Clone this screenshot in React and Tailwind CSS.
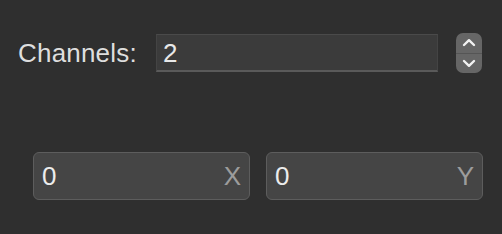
export default function App() {
  const font = { fontFamily: '"Liberation Sans", Arial, sans-serif' };
  return (
    <div className="w-[502px] h-[234px] bg-[#2f2f2f] flex flex-col" style={font}>
      <div className="flex items-center pt-[33px] pl-[18px]">
        <span className="text-[26px] leading-none text-[#dedede] w-[138px] tracking-[0.2px]">Channels:</span>
        <div className="w-[282px] h-[38px] bg-[#3b3b3b] border-t border-t-[#4a4a4a] border-x border-x-[#444] border-b-2 border-b-[#5a5a5a] flex items-center pl-[6px] text-[26px] leading-none text-[#e8e8e8]">
          2
        </div>
        <div className="ml-[18px] w-[26px] h-[40px] rounded-[7px] bg-[#666] flex flex-col overflow-hidden">
          <div className="flex-1 flex items-center justify-center border-b border-b-[#555]">
            <svg width="14" height="9" viewBox="0 0 14 9" fill="none">
              <path d="M2 7 L7 2.2 L12 7" stroke="#f2f2f2" strokeWidth="2.4" strokeLinecap="round" strokeLinejoin="round" />
            </svg>
          </div>
          <div className="flex-1 flex items-center justify-center">
            <svg width="14" height="9" viewBox="0 0 14 9" fill="none">
              <path d="M2 2 L7 6.8 L12 2" stroke="#f2f2f2" strokeWidth="2.4" strokeLinecap="round" strokeLinejoin="round" />
            </svg>
          </div>
        </div>
      </div>
      <div className="flex gap-[16px] pl-[33px] mt-[79px]">
        <div className="w-[217px] h-[48px] rounded-[6px] bg-[#454545] border-[1.5px] border-[#5d5d5d] flex items-center justify-between pl-[8px] pr-[8px] text-[26px] leading-none">
          <span className="text-[#ececec]">0</span>
          <span className="text-[#9c9c9c]">X</span>
        </div>
        <div className="w-[217px] h-[48px] rounded-[6px] bg-[#454545] border-[1.5px] border-[#5d5d5d] flex items-center justify-between pl-[8px] pr-[8px] text-[26px] leading-none">
          <span className="text-[#ececec]">0</span>
          <span className="text-[#9c9c9c]">Y</span>
        </div>
      </div>
    </div>
  );
}
